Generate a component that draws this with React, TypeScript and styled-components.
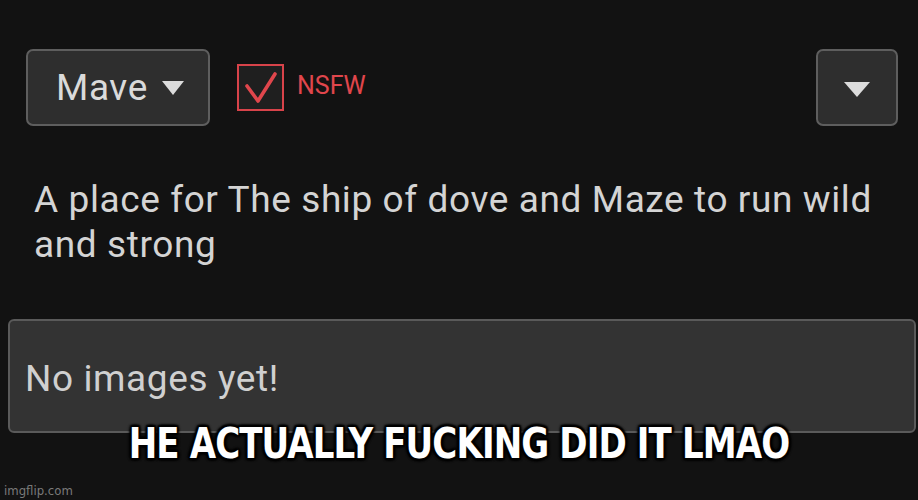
import React from 'react';
import styled, { createGlobalStyle } from 'styled-components';

const GlobalStyle = createGlobalStyle`
  html, body {
    margin: 0;
    padding: 0;
    background: #121212;
  }
  body {
    font-family: Roboto, "Noto Sans", sans-serif;
  }
`;

const Caret: React.FC<{ w: number; h: number }> = ({ w, h }) => (
  <svg width={w} height={h} viewBox={`0 0 ${w} ${h}`}>
    <polygon points={`0,0 ${w},0 ${w / 2},${h}`} fill="#dcdcdc" />
  </svg>
);

const App: React.FC = () => {
  return (
    <Page>
      <GlobalStyle />
      <TopRow>
        <LeftGroup>
          <DropButton>
            <span>Mave</span>
            <Caret w={22} h={14} />
          </DropButton>
          <CheckWrap>
            <CheckBox>
              <svg width="42" height="42" viewBox="0 0 42 42">
                <polyline points="7,19 18,34 35,7" fill="none" stroke="#e0464c" strokeWidth="3.6" strokeLinecap="round" strokeLinejoin="round" />
              </svg>
            </CheckBox>
            <CheckLabel>NSFW</CheckLabel>
          </CheckWrap>
        </LeftGroup>
        <IconButton>
          <Caret w={26} h={15} />
        </IconButton>
      </TopRow>
      <Description>
        A place for The ship of dove and Maze to run wild
        <br />
        and strong
      </Description>
      <Panel>
        <PanelText>No images yet!</PanelText>
      </Panel>
      <Caption>HE ACTUALLY FUCKING DID IT LMAO</Caption>
      <Watermark>imgflip.com</Watermark>
    </Page>
  );
};

export default App;

const Page = styled.div`
  position: relative;
  width: 918px;
  height: 500px;
  overflow: hidden;
  background: #121212;
  color: #d8d8d8;
`;

const TopRow = styled.div`
  display: flex;
  flex-direction: row;
  justify-content: space-between;
  align-items: center;
  padding: 49px 20px 0 26px;
`;

const LeftGroup = styled.div`
  display: flex;
  flex-direction: row;
  align-items: center;
  gap: 27px;
`;

const DropButton = styled.div`
  box-sizing: border-box;
  width: 184px;
  height: 77px;
  display: flex;
  align-items: center;
  gap: 14px;
  padding-left: 28px;
  background: #2e2e2e;
  border: 2px solid #5e5e5e;
  border-radius: 7px;
  font-size: 37px;
  letter-spacing: 0.6px;
  color: #dadada;
  span {
    margin-top: 0;
  }
`;

const CheckWrap = styled.div`
  display: flex;
  flex-direction: row;
  align-items: center;
  gap: 13px;
`;

const CheckBox = styled.div`
  box-sizing: border-box;
  width: 47px;
  height: 47px;
  border: 2px solid #d8434a;
  background: #1f1f1f;
  display: flex;
  align-items: center;
  justify-content: center;
`;

const CheckLabel = styled.span`
  font-size: 25px;
  color: #e0464c;
  margin-top: -4px;
`;

const IconButton = styled.div`
  box-sizing: border-box;
  width: 82px;
  height: 77px;
  display: flex;
  align-items: center;
  justify-content: center;
  padding-top: 3px;
  background: #2e2e2e;
  border: 2px solid #5e5e5e;
  border-radius: 7px;
`;

const Description = styled.div`
  margin: 51px 0 0 34px;
  font-size: 37px;
  line-height: 45px;
  letter-spacing: 0.6px;
  color: #d4d4d4;
`;

const Panel = styled.div`
  box-sizing: border-box;
  margin: 52px 2px 0 8px;
  height: 114px;
  display: flex;
  align-items: center;
  padding-left: 15px;
  background: #333333;
  border: 2px solid #5a5a5a;
  border-radius: 6px;
`;

const PanelText = styled.span`
  font-size: 37px;
  letter-spacing: 0.6px;
  color: #d0d0d0;
  margin-top: 4px;
`;

const Caption = styled.div`
  position: absolute;
  left: 0;
  right: 0;
  top: 418px;
  text-align: center;
  font-family: "DejaVu Sans Condensed", "DejaVu Sans", sans-serif;
  font-weight: bold;
  font-size: 43px;
  letter-spacing: -1px;
  color: #ffffff;
  transform: scaleX(0.88);
  text-shadow:
    2px 2px 2px #000, -2px -2px 2px #000, 2px -2px 2px #000, -2px 2px 2px #000,
    0 2px 3px #000, 0 -2px 3px #000, 2px 0 3px #000, -2px 0 3px #000;
`;

const Watermark = styled.div`
  position: absolute;
  left: 4px;
  bottom: 2px;
  font-family: "Liberation Sans Narrow", "DejaVu Sans Condensed", sans-serif;
  font-size: 13px;
  color: #7a7a7a;
`;
